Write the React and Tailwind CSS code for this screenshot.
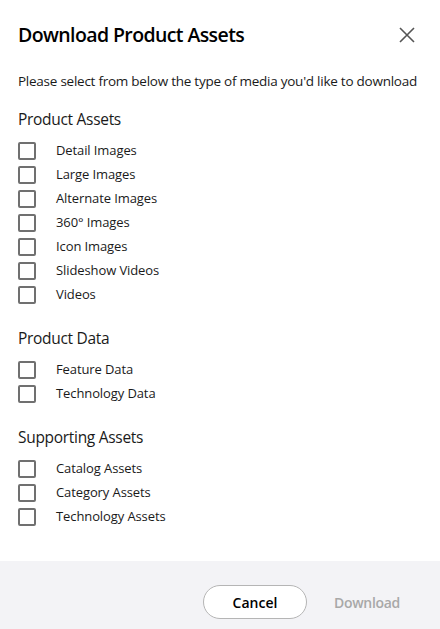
import React from "react";

const sections = [
  {
    title: "Product Assets",
    items: ["Detail Images", "Large Images", "Alternate Images", "360° Images", "Icon Images", "Slideshow Videos", "Videos"],
  },
  { title: "Product Data", items: ["Feature Data", "Technology Data"] },
  { title: "Supporting Assets", items: ["Catalog Assets", "Category Assets", "Technology Assets"] },
];

export default function App() {
  return (
    <div
      className="w-[440px] h-[629px] bg-white flex flex-col text-[#1a1a1a]"
      style={{ fontFamily: '"Open Sans", "Noto Sans", sans-serif' }}
    >
      {/* Header */}
      <div className="flex items-center justify-between pl-[18px] pr-[24px] pt-[21px]">
        <h1 className="text-[19.5px] leading-7 font-semibold text-black tracking-[-0.6px]">Download Product Assets</h1>
        <button className="w-[18px] h-[18px] flex items-center justify-center text-[#555]">
          <svg width="16" height="16" viewBox="0 0 16 16" fill="none" stroke="currentColor" strokeWidth="1.6">
            <path d="M1 1L15 15M15 1L1 15" />
          </svg>
        </button>
      </div>

      {/* Body */}
      <div className="flex-1 px-[18px]">
        <p className="mt-[22px] text-[13.5px] leading-5 text-[#1a1a1a] tracking-[-0.25px]">
          Please select from below the type of media you'd like to download
        </p>

        {sections.map((s, i) => (
          <div key={s.title} className={i === 0 ? "mt-[16px]" : "mt-[19px]"}>
            <h2 className="text-[15.5px] leading-6 text-[#1a1a1a] tracking-[-0.3px]">{s.title}</h2>
            <div className="mt-[8px] flex flex-col">
              {s.items.map((item) => (
                <label key={item} className="h-6 flex items-center gap-5">
                  <span className="w-[18px] h-[18px] border-2 border-[#707070] rounded-[2px] bg-white shrink-0" />
                  <span className="text-[13px] text-[#1a1a1a] tracking-[-0.1px]">{item}</span>
                </label>
              ))}
            </div>
          </div>
        ))}
      </div>

      {/* Footer */}
      <div className="h-[68px] bg-[#f3f3f6] flex items-start justify-end gap-2 pt-[24px] pr-[21px]">
        <button className="w-[104px] h-[34px] rounded-full border border-[#b5b5b5] bg-white text-[14px] font-semibold text-black">
          Cancel
        </button>
        <button className="w-[104px] h-[34px] rounded-full text-[14px] font-semibold text-[#a8a8a8] tracking-[-0.3px]">
          Download
        </button>
      </div>
    </div>
  );
}
